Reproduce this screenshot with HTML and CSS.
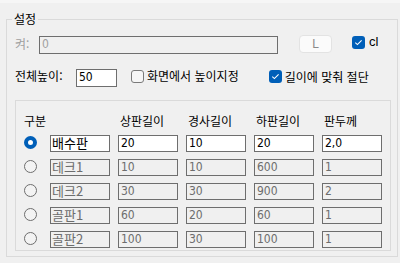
FILE: index.html
```html
<!DOCTYPE html>
<html lang="ko">
<head>
<meta charset="utf-8">
<link rel="stylesheet" href="styles.css">
</head>
<body>
<div class="topband"></div>
<fieldset class="group">
  <legend class="group-title">설정</legend>
  <div class="row row-a">
    <span class="lbl lbl-off lbl-key">켜:</span>
    <div class="field field-off field-key">0</div>
    <div class="btn-l">L</div>
    <div class="chk chk-cl">
      <span class="box box-on"><svg width="13" height="13" viewBox="0 0 13 13"><path d="M3.3 6.6 L5.4 8.6 L9.6 4.4" fill="none" stroke="#fff" stroke-width="1.1"/></svg></span>
      <span class="chk-text">cl</span>
    </div>
  </div>
  <div class="row row-b">
    <span class="lbl lbl-height">전체높이:</span>
    <div class="field field-on field-height">50</div>
    <div class="chk chk-screen">
      <span class="box box-off"></span>
      <span class="chk-text">화면에서 높이지정</span>
    </div>
    <div class="chk chk-cut">
      <span class="box box-on"><svg width="13" height="13" viewBox="0 0 13 13"><path d="M3.3 6.6 L5.4 8.6 L9.6 4.4" fill="none" stroke="#fff" stroke-width="1.1"/></svg></span>
      <span class="chk-text">길이에 맞춰 절단</span>
    </div>
  </div>
  <div class="inner">
    <div class="table">
      <div class="hd hd-first">구분</div>
      <div class="hd">상판길이</div>
      <div class="hd">경사길이</div>
      <div class="hd">하판길이</div>
      <div class="hd">판두께</div>

      <div class="radio radio-on"></div>
      <div class="field field-on kr">배수판</div>
      <div class="field field-on">20</div>
      <div class="field field-on">10</div>
      <div class="field field-on">20</div>
      <div class="field field-on">2,0</div>

      <div class="radio"></div>
      <div class="field field-off kr">데크1</div>
      <div class="field field-off">10</div>
      <div class="field field-off">10</div>
      <div class="field field-off">600</div>
      <div class="field field-off">1</div>

      <div class="radio"></div>
      <div class="field field-off kr">데크2</div>
      <div class="field field-off">30</div>
      <div class="field field-off">30</div>
      <div class="field field-off">900</div>
      <div class="field field-off">2</div>

      <div class="radio"></div>
      <div class="field field-off kr">골판1</div>
      <div class="field field-off">60</div>
      <div class="field field-off">20</div>
      <div class="field field-off">60</div>
      <div class="field field-off">1</div>

      <div class="radio"></div>
      <div class="field field-off kr">골판2</div>
      <div class="field field-off">100</div>
      <div class="field field-off">30</div>
      <div class="field field-off">100</div>
      <div class="field field-off">1</div>
    </div>
  </div>
</fieldset>
</body>
</html>
```

FILE: styles.css
```css
html, body {
  margin: 0;
  padding: 0;
}
body {
  width: 400px;
  height: 263px;
  background: #f0f0f0;
  font-family: "Noto Sans CJK KR", "Noto Sans", sans-serif;
  font-size: 12px;
  color: #000;
  overflow: hidden;
}
.topband {
  height: 3px;
  background: #f6f6f6;
}
.group {
  box-sizing: border-box;
  margin: 8px 0 0 6px;
  width: 392px;
  height: 246px;
  padding: 0 6px 0 8px;
  border: 1px solid #dadada;
}
.group-title {
  padding: 0 2px;
  margin-left: -3px;
  height: 16px;
  line-height: 16px;
  font-size: 12px;
}
.row {
  display: flex;
  align-items: center;
}
.row-a {
  margin-top: 8px;
  height: 18px;
}
.row-b {
  margin-top: 14px;
  height: 18px;
}
.lbl {
  white-space: nowrap;
  line-height: 16px;
}
.lbl-off { color: #a0a0a0; }
.lbl-key { width: 24px; }
.lbl-height { width: 61px; }

.field {
  box-sizing: border-box;
  height: 17px;
  border: 1px solid #6e6e6e;
  padding-left: 2px;
  font-family: "Liberation Sans Narrow", "DejaVu Sans Condensed", "Liberation Sans", sans-serif;
  font-size: 12px;
  line-height: 15px;
  white-space: nowrap;
}
.field.kr {
  font-family: "Noto Sans CJK KR", sans-serif;
  font-size: 13px;
  line-height: 13px;
  padding-left: 1px;
}
.field-on { background: #fff; color: #000; }
.field-off { background: #f0f0f0; color: #6d6d6d; }
.field-key {
  width: 239px;
  height: 18px;
  margin-top: 2px;
  color: #a0a0a0;
}
.field-height {
  width: 41px;
  height: 18px;
  margin-top: 4px;
}

.btn-l {
  box-sizing: border-box;
  width: 33px;
  height: 18px;
  margin-left: 21px;
  background: #fbfbfb;
  border: 1px solid #e3e3e3;
  border-radius: 4px;
  color: #8a8a8a;
  text-align: center;
  line-height: 16px;
  font-family: "Liberation Sans", sans-serif;
  font-size: 12px;
}

.chk {
  display: flex;
  align-items: center;
  white-space: nowrap;
}
.chk-cl { margin-left: 20px; margin-top: -4px; }
.chk-screen { margin-left: 14px; }
.chk-cut { margin-left: 30px; margin-top: 1px; }
.chk-text { margin-left: 3px; line-height: 16px; }
.chk-cl .chk-text { font-family: "Liberation Sans", sans-serif; font-size: 13px; margin-left: 4px; }

.box {
  box-sizing: border-box;
  width: 13px;
  height: 13px;
  border-radius: 3px;
  display: block;
}
.box svg { display: block; }
.box-on { background: #005fb8; }
.box-off { border: 1px solid #7a7a7a; background: #f6f6f6; }

.inner {
  box-sizing: border-box;
  margin-top: 15px;
  width: 376px;
  height: 151px;
  border: 1px solid #dadada;
  padding: 12px 0 0 8px;
}
.table {
  display: grid;
  grid-template-columns: 18px repeat(5, 60px);
  grid-template-rows: 15px repeat(5, 17px);
  column-gap: 8px;
  row-gap: 7px;
}
.hd {
  padding-left: 2px;
  line-height: 15px;
  white-space: nowrap;
}
.hd-first {
  grid-column: span 2;
  padding-left: 0;
}
.radio {
  box-sizing: border-box;
  width: 13px;
  height: 13px;
  margin-top: 1px;
  border-radius: 50%;
  border: 1px solid #6e6e6e;
  background: #f3f3f3;
}
.radio-on {
  border: 4px solid #005fb8;
  background: #fff;
}
```
